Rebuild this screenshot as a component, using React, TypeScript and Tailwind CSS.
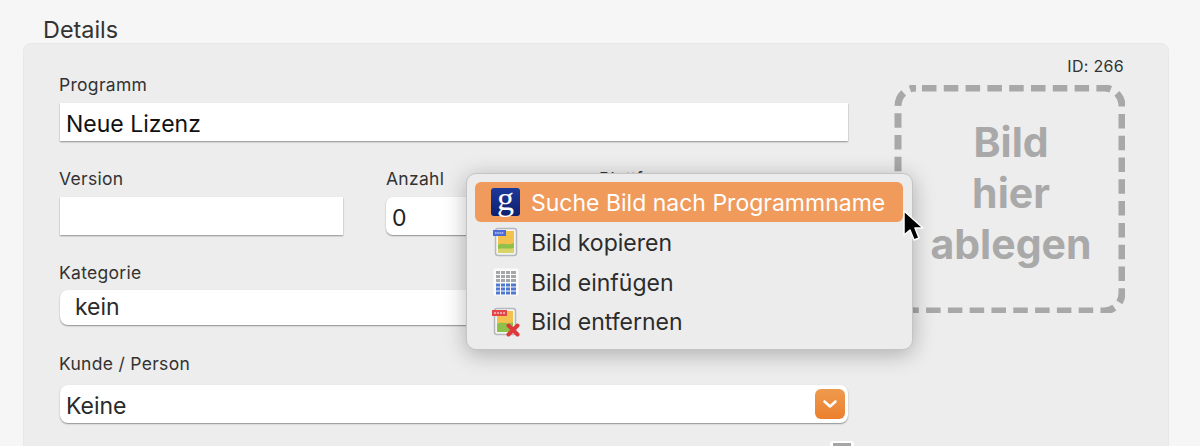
import React from 'react';

const font = { fontFamily: 'Inter, "Liberation Sans", sans-serif' };

const CopyIcon = () => (
  <svg width="28" height="30" viewBox="0 0 28 30">
    <rect x="3.500" y="1.500" width="21" height="27" rx="2.500" fill="#f4f4f4" stroke="#b4b8bc" strokeWidth="1.500" />
    <rect x="6" y="4" width="16" height="22" fill="#f3c14e" />
    <path d="M6 18c5-3 10 1 16-2v6H6z" fill="#8fc04a" />
    <path d="M6 22c5-1.500 10 .5 16-1v5H6z" fill="#d8d468" />
    <rect x="1" y="3" width="13" height="6" fill="#4a6bd8" />
    <path d="M3 6h9" stroke="#fff" strokeWidth="1.200" strokeDasharray="1.500 .7" />
  </svg>
);

const PasteIcon = () => (
  <svg width="26" height="28" viewBox="0 0 26 28">
    <rect x="0.500" y="0.500" width="25" height="27" rx="2" fill="#fbfbfb" />
    <path d="M3 4.500h20M3 8.500h20M3 12.500h20" stroke="#a4a6a8" strokeWidth="3" />
    <path d="M3 17h20M3 21h20M3 25h20" stroke="#4f78cf" strokeWidth="3" />
    <path d="M7.500 3v11M12.500 3v11M17.500 3v11M7.500 15v12M12.500 15v12M17.500 15v12" stroke="#fbfbfb" strokeWidth="1" />
  </svg>
);

const DeleteIcon = () => (
  <svg width="30" height="30" viewBox="0 0 30 30">
    <rect x="3.500" y="1.500" width="21" height="26" rx="2.500" fill="#f4f4f4" stroke="#b4b8bc" strokeWidth="1.500" />
    <rect x="6" y="4" width="16" height="21" fill="#f3c14e" />
    <path d="M6 17c5-3 10 1 16-2v10H6z" fill="#8fc04a" />
    <rect x="1" y="3" width="15" height="6" fill="#e2484a" />
    <path d="M3 6h11" stroke="#fff" strokeWidth="1.200" strokeDasharray="2 1" />
    <path d="M17.500 18.500l9 9M26.500 18.500l-9 9" stroke="#e0383a" strokeWidth="4" strokeLinecap="round" />
  </svg>
);

const Cursor = () => (
  <svg width="22" height="34" viewBox="0 0 22 34">
    <path d="M2 1v24l6-5 4 10 5-2-4-10h8z" fill="#000" stroke="#fff" strokeWidth="1.500" strokeLinejoin="round" />
  </svg>
);

const Label = ({ children }: { children: React.ReactNode }) => (
  <div className="text-[17.500px] leading-[22px] tracking-[0.3px] text-[#333]">{children}</div>
);

const fieldShadow = 'shadow-[0_1px_1.500px_rgba(0,0,0,0.4)]';

export default function App() {
  return (
    <div style={font} className="h-[446px] w-[1200px] overflow-hidden bg-[#f6f6f6] relative">
      <div className="pl-[43px] pt-[16px] text-[23.400px] leading-[27px] text-[#333]">Details</div>

      {/* Panel */}
      <div className="ml-[23px] w-[1146px] h-[500px] rounded-t-[8px] bg-[#ededed] border border-[#e8e8e8] flex pl-[35px] pt-[30px]">
        <div className="w-[789px] shrink-0">
          <Label>Programm</Label>
          <div className={`mt-[7px] h-[38px] ml-px bg-white ${fieldShadow} pl-[6px] text-[23px] leading-[43px] text-[#111]`}>Neue Lizenz</div>

          <div className="mt-[27px] flex">
            <div className="w-[327px]">
              <Label>Version</Label>
              <div className={`mt-[7px] h-[38px] ml-px w-[283px] bg-white ${fieldShadow}`} />
            </div>
            <div className="w-[213px]">
              <Label>Anzahl</Label>
              <div className={`mt-[7px] h-[38px] w-[180px] rounded-[7px] bg-white ${fieldShadow} pl-[6px] text-[23px] leading-[43px] text-[#222]`}>0</div>
            </div>
            <div className="flex-1">
              <Label>Plattform</Label>
            </div>
          </div>

          <div className="mt-[27px]">
            <Label>Kategorie</Label>
            <div className={`mt-[6px] h-[35px] ml-px rounded-[8px] bg-white ${fieldShadow} pl-[15px] text-[23px] leading-[34px] text-[#2a2a2a]`}>kein</div>
          </div>

          <div className="mt-[28px]">
            <Label>Kunde / Person</Label>
            <div className={`mt-[10px] h-[38px] ml-px rounded-[8px] bg-white ${fieldShadow} pl-[6px] pr-[3px] flex items-center justify-between text-[23px] text-[#2a2a2a]`}>
              <span className="pt-[4px]">Keine</span>
              <span className="w-[30px] h-[30px] rounded-[6px] bg-gradient-to-b from-[#ee9a4e] to-[#ec7f2c] flex items-center justify-center">
                <svg width="16" height="10" viewBox="0 0 16 10">
                  <path d="M2.500 2.500l5.500 5 5.500-5" fill="none" stroke="#fff" strokeWidth="2.600" strokeLinecap="round" strokeLinejoin="round" />
                </svg>
              </span>
            </div>
            <div className="mt-[18px] ml-[771px] w-[24px] h-[12px] rounded-t-[3px] bg-white pt-[2px] px-[3px]">
              <div className="h-[3px] bg-[#a4a6a8]" />
            </div>
          </div>
        </div>

        {/* Drop zone */}
        <div className="ml-[45px] w-[232px]">
          <div className="text-right pr-[1px] mt-[-18px] text-[16px] leading-[20px] tracking-[0.3px] text-[#333]">ID: 266</div>
          <div className="relative mt-[9px] w-[232px] h-[228px] pb-[11px] pl-[4px] flex items-center justify-center text-center font-bold text-[41px] leading-[51px] text-[#a9a9a9]">
            <svg className="absolute inset-0" width="232" height="228" viewBox="0 0 232 228">
              <rect x="5" y="3" width="224" height="223" rx="18" fill="none" stroke="#a8a8a8" strokeWidth="7" strokeDasharray="14.500 7.300" strokeDashoffset="-6" />
            </svg>
            <div>Bild<br />hier<br />ablegen</div>
          </div>
        </div>
      </div>

      {/* Context menu */}
      <div className="absolute left-[466px] top-[173px] w-[447px] h-[177px] rounded-[10px] bg-[#ececec] border border-[#c4c4c4] shadow-[0_4px_22px_rgba(0,0,0,0.28)] pt-[8px] pl-[8px] pr-[9px] text-[23px] text-[#2c2c2c]">
        <div className="h-[40px] rounded-[6px] bg-[#f09a5b] text-white flex items-center">
          <span className="ml-[16px] mr-[11px] w-[29px] h-[28px] rounded-[3px] bg-gradient-to-b from-[#1c3a9c] to-[#0e1f6e] flex items-center justify-center text-white font-normal text-[34px] leading-[20px] pb-[7px]" style={{ fontFamily: '"Liberation Serif", serif' }}>g</span>
          <span className="pt-[2px]">Suche Bild nach Programmname</span>
        </div>
        <div className="h-[40px] flex items-center pl-[14px] gap-[9px]"><span className="w-[33px] flex justify-center"><CopyIcon /></span><span className="pt-[2px]">Bild kopieren</span></div>
        <div className="h-[40px] flex items-center pl-[14px] gap-[9px]"><span className="w-[33px] flex justify-center"><PasteIcon /></span><span className="pt-[2px]">Bild einfügen</span></div>
        <div className="h-[39px] flex items-center pl-[14px] gap-[9px]"><span className="w-[33px] flex justify-center"><DeleteIcon /></span><span className="pt-[2px]">Bild entfernen</span></div>
      </div>

      <div className="absolute left-[902px] top-[210px]"><Cursor /></div>
    </div>
  );
}
